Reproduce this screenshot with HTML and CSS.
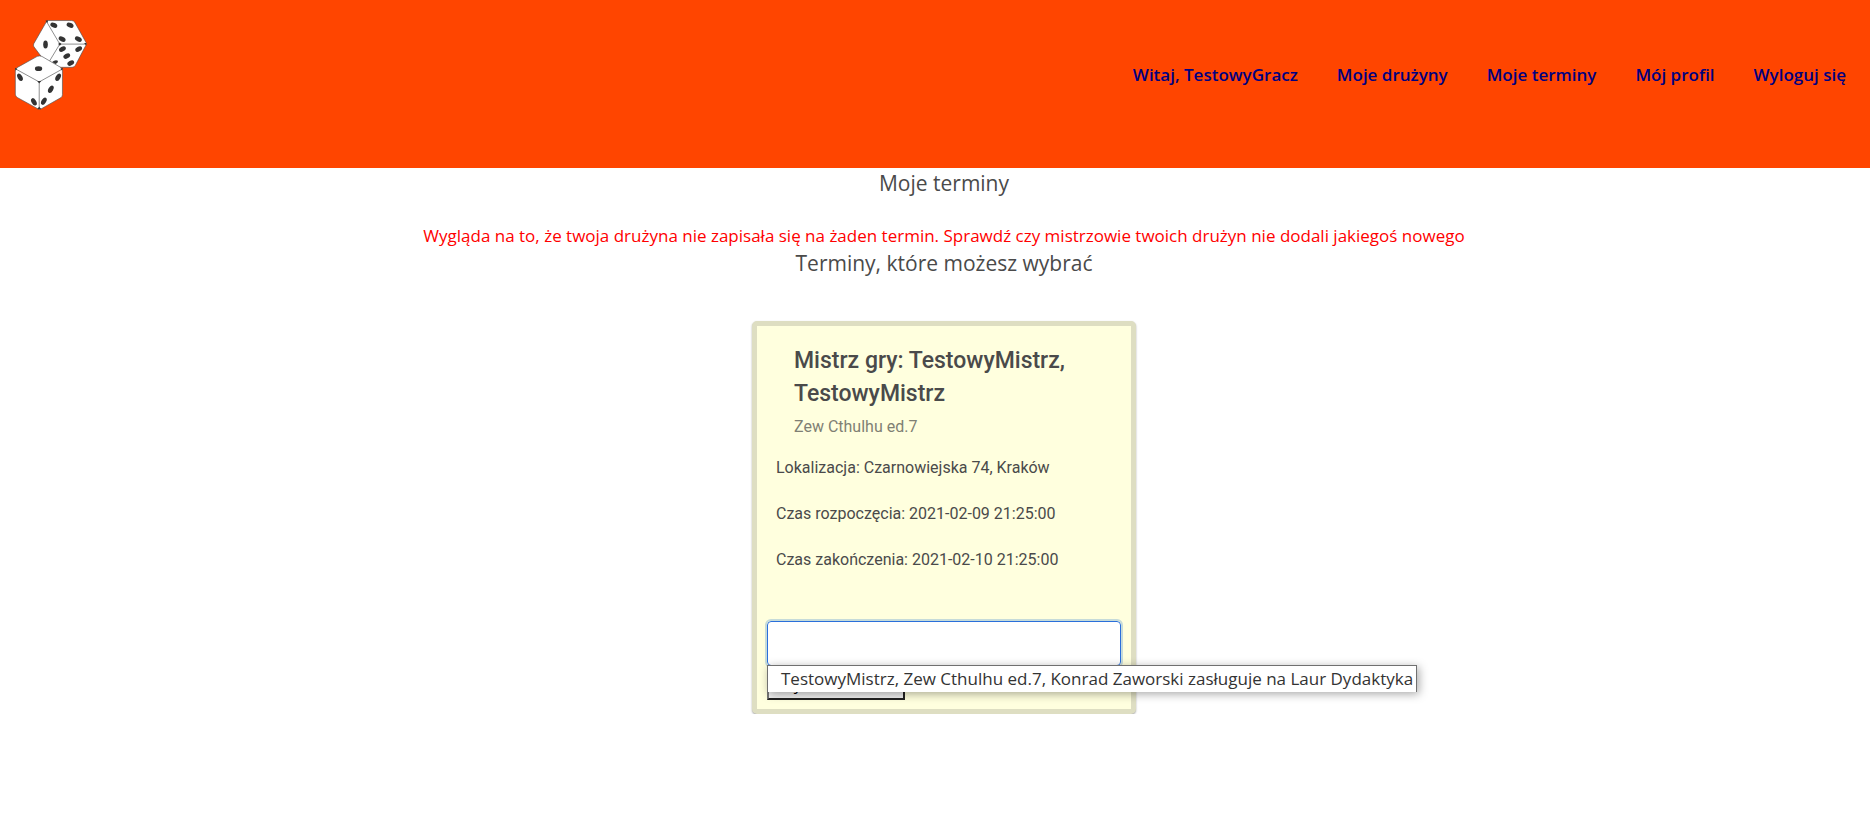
FILE: index.html
```html
<!DOCTYPE html>
<html lang="pl">
<head>
<meta charset="utf-8">
<title>Moje terminy</title>
<link rel="stylesheet" href="styles.css">
</head>
<body>
<header class="topbar">
  <a class="logo" href="#" aria-label="Strona główna">
    <svg class="logo-image" viewBox="0 0 220 276" aria-hidden="true">
      <g fill="#fff" stroke="#555" stroke-width="2" stroke-linejoin="round">
        <path d="M98 7q3-3 6-3h69q7 0 10 5l34 61q2 4 0 8l-32 61q-3 6-10 6h-62q-7 0-11-6L60 83q-3-5 0-10z"/>
        <path fill="none" d="M98 7l40 68h79M138 75l-40 66"/>
        <path d="M70 112q7-3 14 0l58 34q4 3 4 8v73q0 6-4 9l-58 33q-7 4-14 0L10 236q-6-4-6-10v-71q0-6 5-9z"/>
        <path fill="none" d="M5 150l71 39 70-39M76 189v80"/>
      </g>
      <g fill="#333">
        <ellipse cx="120" cy="18" rx="11" ry="7" transform="rotate(25 120 18)"/>
        <ellipse cx="169" cy="18" rx="11" ry="7" transform="rotate(25 169 18)"/>
        <ellipse cx="145" cy="60" rx="11" ry="7" transform="rotate(25 145 60)"/>
        <ellipse cx="194" cy="60" rx="11" ry="7" transform="rotate(25 194 60)"/>
        <ellipse cx="95" cy="76" rx="7" ry="12"/>
        <ellipse cx="146" cy="90" rx="11" ry="7" transform="rotate(-30 146 90)"/>
        <ellipse cx="195" cy="90" rx="11" ry="7" transform="rotate(-30 195 90)"/>
        <ellipse cx="159" cy="111" rx="11" ry="7" transform="rotate(-30 159 111)"/>
        <ellipse cx="171" cy="132" rx="11" ry="7" transform="rotate(-30 171 132)"/>
        <path d="M115 129q9-8 17-4 2 6-7 10z"/>
        <ellipse cx="74" cy="149" rx="11" ry="7"/>
        <ellipse cx="18" cy="175" rx="7" ry="12" transform="rotate(-30 18 175)"/>
        <ellipse cx="60" cy="249" rx="7" ry="12" transform="rotate(-30 60 249)"/>
        <ellipse cx="133" cy="175" rx="7" ry="12" transform="rotate(30 133 175)"/>
        <ellipse cx="111" cy="211" rx="7" ry="12" transform="rotate(30 111 211)"/>
        <ellipse cx="90" cy="247" rx="7" ry="12" transform="rotate(30 90 247)"/>
        <path d="M70 186h12l-6 8zM133 75l5-5 5 5-5 5zM95 4h8l-3 8zM211 72h7v7zM3 146l7 3-5 6zM147 146l-7 3 5 6zM70 271h12l-6-8z"/>
      </g>
    </svg>
  </a>
  <nav class="menu">
    <a href="#">Witaj, TestowyGracz</a>
    <a href="#">Moje drużyny</a>
    <a href="#">Moje terminy</a>
    <a href="#">Mój profil</a>
    <a href="#">Wyloguj się</a>
  </nav>
</header>
<main class="content">
  <h1 class="heading">Moje terminy</h1>
  <p class="notice">Wygląda na to, że twoja drużyna nie zapisała się na żaden termin. Sprawdź czy mistrzowie twoich drużyn nie dodali jakiegoś nowego</p>
  <h2 class="heading">Terminy, które możesz wybrać</h2>
  <article class="card">
    <header class="card-header">
      <h3 class="card-title">Mistrz gry: TestowyMistrz, TestowyMistrz</h3>
      <p class="card-subtitle">Zew Cthulhu ed.7</p>
    </header>
    <div class="card-body">
      <p>Lokalizacja: Czarnowiejska 74, Kraków</p>
      <p>Czas rozpoczęcia: 2021-02-09 21:25:00</p>
      <p>Czas zakończenia: 2021-02-10 21:25:00</p>
    </div>
    <form class="card-form">
      <div class="picker">
        <input class="team-input" type="text" aria-label="Drużyna">
        <ul class="options">
          <li>TestowyMistrz, Zew Cthulhu ed.7, Konrad Zaworski zasługuje na Laur Dydaktyka</li>
        </ul>
      </div>
      <button class="submit" type="button">Wybierz termin</button>
    </form>
  </article>
</main>
</body>
</html>
```
FILE: styles.css
```css
* { box-sizing: border-box; }

body {
  margin: 0;
  background: #fff;
  color: #4a4a4a;
  font-family: "Open Sans", "Noto Sans", sans-serif;
  font-size: 17px;
  line-height: 24px;
}

h1, h2, h3, p, ul { margin: 0; padding: 0; font-weight: 400; }

.topbar {
  display: flex;
  justify-content: space-between;
  align-items: flex-start;
  min-height: 168px;
  padding: 19px 24px 0 14px;
  background: #ff4500;
}

.logo-image { display: block; width: 73px; height: 92px; }

.menu { display: flex; gap: 39px; padding-top: 44px; }

.menu a { color: #000080; font-weight: 600; text-decoration: none; }

.content {
  display: flex;
  flex-direction: column;
  align-items: center;
  padding-left: 18px;
}

.heading { font-size: 21px; line-height: 30px; }

.notice { padding-top: 26px; color: #f00; }

.card {
  width: 384px;
  margin-top: 43px;
  padding: 18px 10px 9px;
  border: 5px solid #dedec2;
  border-radius: 5px;
  background: #ffffde;
  box-shadow: 0 1px 2px rgba(0, 0, 0, 0.35);
  font-family: Roboto, sans-serif;
  font-size: 16px;
}

.card-header { padding: 0 27px; }

.card-title { font-size: 23px; font-weight: 500; line-height: 33px; }

.card-subtitle { padding-top: 5px; color: #7f7f74; }

.card-body {
  display: flex;
  flex-direction: column;
  gap: 22px;
  padding: 17px 9px 49px;
}

.picker { position: relative; }

.team-input {
  display: block;
  width: 100%;
  height: 45px;
  padding: 0 12px;
  border: 1px solid #2a6fdb;
  border-radius: 4px;
  background: #fff;
  font: inherit;
  outline: 2px solid #c6dbd9;
}

.options {
  position: absolute;
  top: 44px;
  left: 0;
  z-index: 1;
  padding: 0 3px 0 13px;
  border: 1px solid #707070;
  border-bottom: 0;
  background: #fff;
  box-shadow: 2px 2px 10px rgba(0, 0, 0, 0.35);
  color: #333;
  font-family: "Open Sans", "Noto Sans", sans-serif;
  font-size: 17px;
  line-height: 26px;
  list-style: none;
  white-space: nowrap;
}

.submit {
  display: block;
  height: 34px;
  padding: 1px 10px 0;
  border: 2px outset #767676;
  background: #efefef;
  color: #000;
  font-family: "Open Sans", "Noto Sans", sans-serif;
  font-size: 16px;
}
```
